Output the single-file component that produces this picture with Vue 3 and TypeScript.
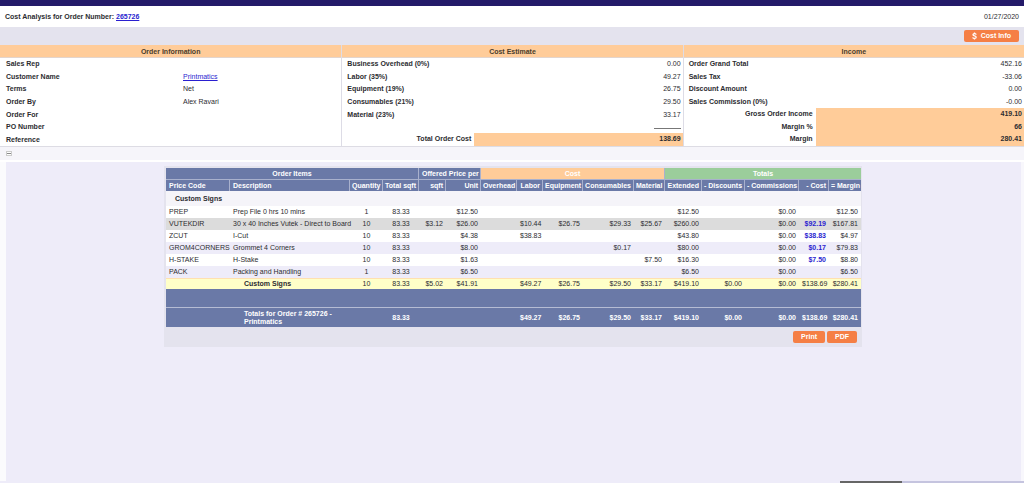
<script setup lang="ts">
interface Entry {
  label: string
  value?: string
  link?: boolean
  rule?: boolean
  total?: boolean
}

interface Line {
  code: string
  desc: string
  cells: string[]
  hover?: boolean
}

const info: Entry[] = [
  { label: 'Sales Rep' },
  { label: 'Customer Name', value: 'Printmatics', link: true },
  { label: 'Terms', value: 'Net' },
  { label: 'Order By', value: 'Alex Ravari' },
  { label: 'Order For' },
  { label: 'PO Number' },
  { label: 'Reference' },
]

const estimate: Entry[] = [
  { label: 'Business Overhead (0%)', value: '0.00' },
  { label: 'Labor (35%)', value: '49.27' },
  { label: 'Equipment (19%)', value: '26.75' },
  { label: 'Consumables (21%)', value: '29.50' },
  { label: 'Material (23%)', value: '33.17' },
  { label: '', rule: true },
  { label: 'Total Order Cost', value: '138.69', total: true },
]

const income: Entry[] = [
  { label: 'Order Grand Total', value: '452.16' },
  { label: 'Sales Tax', value: '-33.06' },
  { label: 'Discount Amount', value: '0.00' },
  { label: 'Sales Commission (0%)', value: '-0.00' },
  { label: 'Gross Order Income', value: '419.10', total: true },
  { label: 'Margin %', value: '66', total: true },
  { label: 'Margin', value: '280.41', total: true },
]

const sums = [
  { title: 'Cost Estimate', rows: estimate },
  { title: 'Income', rows: income },
]

const widths: number[] = [64, 120, 33, 36, 27, 35, 36, 26, 40, 51, 31, 37, 43, 54, 30, 32]
const total = widths.reduce((a, b) => a + b, 0)

const columns: string[] = [
  'Price Code', 'Description', 'Quantity', 'Total sqft', 'sqft', 'Unit', 'Overhead', 'Labor',
  'Equipment', 'Consumables', 'Material', 'Extended', '- Discounts', '- Commissions', '- Cost', '= Margin',
]

const lines: Line[] = [
  { code: 'PREP', desc: 'Prep File 0 hrs 10 mins', cells: ['1', '83.33', '', '$12.50', '', '', '', '', '', '$12.50', '', '$0.00', '', '$12.50'] },
  { code: 'VUTEKDIR', desc: '30 x 40 Inches Vutek - Direct to Board', hover: true, cells: ['10', '83.33', '$3.12', '$26.00', '', '$10.44', '$26.75', '$29.33', '$25.67', '$260.00', '', '$0.00', '$92.19', '$167.81'] },
  { code: 'ZCUT', desc: 'I-Cut', cells: ['10', '83.33', '', '$4.38', '', '$38.83', '', '', '', '$43.80', '', '$0.00', '$38.83', '$4.97'] },
  { code: 'GROM4CORNERS', desc: 'Grommet 4 Corners', cells: ['10', '83.33', '', '$8.00', '', '', '', '$0.17', '', '$80.00', '', '$0.00', '$0.17', '$79.83'] },
  { code: 'H-STAKE', desc: 'H-Stake', cells: ['10', '83.33', '', '$1.63', '', '', '', '', '$7.50', '$16.30', '', '$0.00', '$7.50', '$8.80'] },
  { code: 'PACK', desc: 'Packing and Handling', cells: ['1', '83.33', '', '$6.50', '', '', '', '', '', '$6.50', '', '$0.00', '', '$6.50'] },
]

const subtotal: string[] = ['10', '83.33', '$5.02', '$41.91', '', '$49.27', '$26.75', '$29.50', '$33.17', '$419.10', '$0.00', '$0.00', '$138.69', '$280.41']
const grand: string[] = ['', '83.33', '', '', '', '$49.27', '$26.75', '$29.50', '$33.17', '$419.10', '$0.00', '$0.00', '$138.69', '$280.41']
</script>

<template>
  <div class="page">
    <div class="brand"></div>
    <header class="title">
      <h1>Cost Analysis for Order Number: <a href="#">265726</a></h1>
      <time datetime="2020-01-27">01/27/2020</time>
    </header>
    <div class="toolbar">
      <button type="button" class="btn cost">
        <svg viewBox="0 0 8 12" aria-hidden="true">
          <path d="M6.800 3.800C6.400 2.800 5.500 2.300 4.100 2.300c-1.600 0-2.600.6-2.600 1.700 0 2.600 5.200 1.300 5.200 4 0 1.200-1.100 1.800-2.700 1.800S1.400 9.200 1.100 8.100M4 .3v2M4 9.800v1.900" />
        </svg>
        <span>Cost Info</span>
      </button>
    </div>

    <section class="summary">
      <div class="block">
        <h2>Order Information</h2>
        <dl class="info">
          <div v-for="row in info" :key="row.label" class="pair">
            <dt>{{ row.label }}</dt>
            <dd><a v-if="row.link" href="#">{{ row.value }}</a><template v-else>{{ row.value }}</template></dd>
          </div>
        </dl>
      </div>
      <div v-for="sum in sums" :key="sum.title" class="block">
        <h2>{{ sum.title }}</h2>
        <dl class="money">
          <div v-for="(row, i) in sum.rows" :key="i" class="pair" :class="{ total: row.total }">
            <dt>{{ row.label }}</dt>
            <dd><span v-if="row.rule" class="rule"></span>{{ row.value }}</dd>
          </div>
        </dl>
      </div>
    </section>

    <div class="fold">
      <button type="button" class="collapse" aria-label="Collapse summary"></button>
    </div>

    <main class="content">
      <div class="panel">
        <table>
          <colgroup>
            <col v-for="(w, i) in widths" :key="i" :style="{ width: (w / total) * 100 + '%' }" />
          </colgroup>
          <thead>
            <tr class="groups">
              <th colspan="4">Order Items</th>
              <th colspan="2">Offered Price per</th>
              <th colspan="5" class="peach">Cost</th>
              <th colspan="5" class="green">Totals</th>
            </tr>
            <tr class="names">
              <th v-for="name in columns" :key="name">{{ name }}</th>
            </tr>
          </thead>
          <tbody>
            <tr class="category">
              <th colspan="16">Custom Signs</th>
            </tr>
            <tr v-for="line in lines" :key="line.code" class="line" :class="{ hover: line.hover }">
              <td>{{ line.code }}</td>
              <td>{{ line.desc }}</td>
              <td v-for="(cell, i) in line.cells" :key="i">
                <a v-if="i === 12 && cell" href="#" class="amount">{{ cell }}</a>
                <template v-else>{{ cell }}</template>
              </td>
            </tr>
            <tr class="subtotal">
              <td></td>
              <td class="caption">Custom Signs</td>
              <td v-for="(cell, i) in subtotal" :key="i">{{ cell }}</td>
            </tr>
          </tbody>
          <tfoot>
            <tr class="spacer"><td colspan="16"></td></tr>
            <tr class="grand">
              <td></td>
              <td class="caption">Totals for Order # 265726 - Printmatics</td>
              <td v-for="(cell, i) in grand" :key="i">{{ cell }}</td>
            </tr>
          </tfoot>
        </table>
        <div class="actions">
          <button type="button" class="btn">Print</button>
          <button type="button" class="btn">PDF</button>
        </div>
      </div>
    </main>
    <div class="status"><span></span></div>
  </div>
</template>

<style>
body {
  margin: 0;
  background: #eeecf9;
}
</style>

<style scoped>
.page {
  display: flex;
  flex-direction: column;
  min-height: 100vh;
  box-sizing: border-box;
  font: 7px/12px "Liberation Sans", Arial, sans-serif;
  color: #2c2c30;
}
h1, h2, dl, dd {
  margin: 0;
  font-size: inherit;
}
a {
  color: #2a1fd0;
}
.brand {
  height: 6px;
  background: #231a69;
}
.title {
  display: flex;
  justify-content: space-between;
  align-items: center;
  height: 21px;
  padding: 0 5px;
  background: #fff;
}
.toolbar {
  display: flex;
  justify-content: flex-end;
  align-items: center;
  height: 18px;
  padding-right: 5px;
  background: #e4e3ee;
}
.btn {
  height: 12px;
  padding: 0 8px;
  border: 0;
  border-radius: 2px;
  background: #f57f45;
  color: #fff;
  font: bold 7px/12px "Liberation Sans", Arial, sans-serif;
}
.cost {
  display: flex;
  align-items: center;
  gap: 4px;
}
.cost svg {
  width: 5px;
  height: 8px;
  fill: none;
  stroke: #fff;
  stroke-width: 2;
}
.summary {
  display: grid;
  grid-template-columns: 1fr 1fr 1fr;
  background: #fff;
}
.block + .block {
  border-left: 1px solid #dddce6;
}
h2 {
  height: 13px;
  line-height: 13px;
  text-align: center;
  background: #ffcc99;
  border-bottom: 1px solid #e3d5cd;
  box-sizing: border-box;
  color: #4a3c2c;
}
dl {
  display: grid;
  grid-template-rows: repeat(7, 1fr);
  height: 88px;
}
.pair {
  display: grid;
  align-items: center;
}
.info .pair {
  grid-template-columns: 177px 1fr;
  padding-left: 6px;
}
.money .pair {
  grid-template-columns: 132px 1fr;
}
dt {
  font-weight: bold;
}
.money dt {
  padding-left: 5px;
  white-space: nowrap;
}
.money dd {
  padding-right: 2px;
  text-align: right;
}
.money .total {
  align-items: stretch;
}
.money .total dt {
  text-align: right;
  padding-right: 3px;
}
.total dd {
  background: #ffcc99;
  font-weight: bold;
}
.rule {
  display: inline-block;
  width: 27px;
  border-bottom: 1px solid #777;
}
.fold {
  display: flex;
  align-items: center;
  height: 13px;
  padding-left: 6px;
  background: #f6f5fa;
  border-top: 1px solid #dddce4;
  border-bottom: 2px solid #fff;
}
.collapse {
  display: flex;
  align-items: center;
  width: 6px;
  height: 5px;
  padding: 0;
  border: 1px solid #ccc;
  background: #fff;
}
.collapse::before {
  content: "";
  flex: 1;
  height: 1px;
  background: #888;
}
.content {
  flex: 1;
  padding: 4px 159px 0 158px;
  border-left: 6px solid #fbfbfd;
  border-right: 3px solid #f8f7fc;
}
.panel {
  padding: 2px 1px 4px 2px;
  background: #e4e3ee;
}
table {
  width: 100%;
  table-layout: fixed;
  border-collapse: separate;
  border-spacing: 0;
}
th, td {
  height: 12px;
  padding: 0 3px;
  box-sizing: border-box;
  line-height: 8px;
  white-space: nowrap;
}
td {
  text-align: right;
}
td:nth-child(1), td:nth-child(2) {
  text-align: left;
}
td:nth-child(3), td:nth-child(4) {
  text-align: center;
}
thead th {
  height: 11px;
  background: #6a79a7;
  color: #fff;
  border-right: 1px solid #a9b1cd;
}
thead th:last-child {
  border-right: 0;
}
.groups th {
  height: 12px;
  border-bottom: 1px solid #a9b1cd;
}
.groups .peach {
  background: #ffcc99;
}
.groups .green {
  background: #9bcd9b;
}
.names th {
  padding: 0 2px;
  text-align: right;
}
.names th:nth-child(-n+2) {
  padding: 0 3px;
  text-align: left;
}
.category th {
  height: 15px;
  padding-left: 9px;
  text-align: left;
  background: #f5f4f9;
}
.line {
  background: #fff;
}
.line:nth-child(odd) {
  background: #eeecf9;
}
.line.hover {
  background: #dcdcdc;
}
.amount {
  font-weight: bold;
  text-decoration: none;
}
.subtotal td {
  height: 11px;
  background: #ffffc8;
  border-top: 1px solid #ffe0b0;
}
td.caption {
  padding-left: 14px;
  font-weight: bold;
  white-space: normal;
}
tfoot td {
  background: #6a79a7;
  color: #fff;
  font-weight: bold;
}
.spacer td {
  height: 18px;
}
.grand td {
  height: 20px;
  border-top: 1px solid #b5bcd4;
}
.actions {
  display: flex;
  justify-content: flex-end;
  gap: 2px;
  padding: 4px 4px 0 0;
}
.status {
  display: flex;
  height: 2px;
  margin-left: 82%;
  background: #c5c4df;
}
.status span {
  width: 34%;
  background: #666;
}
</style>
